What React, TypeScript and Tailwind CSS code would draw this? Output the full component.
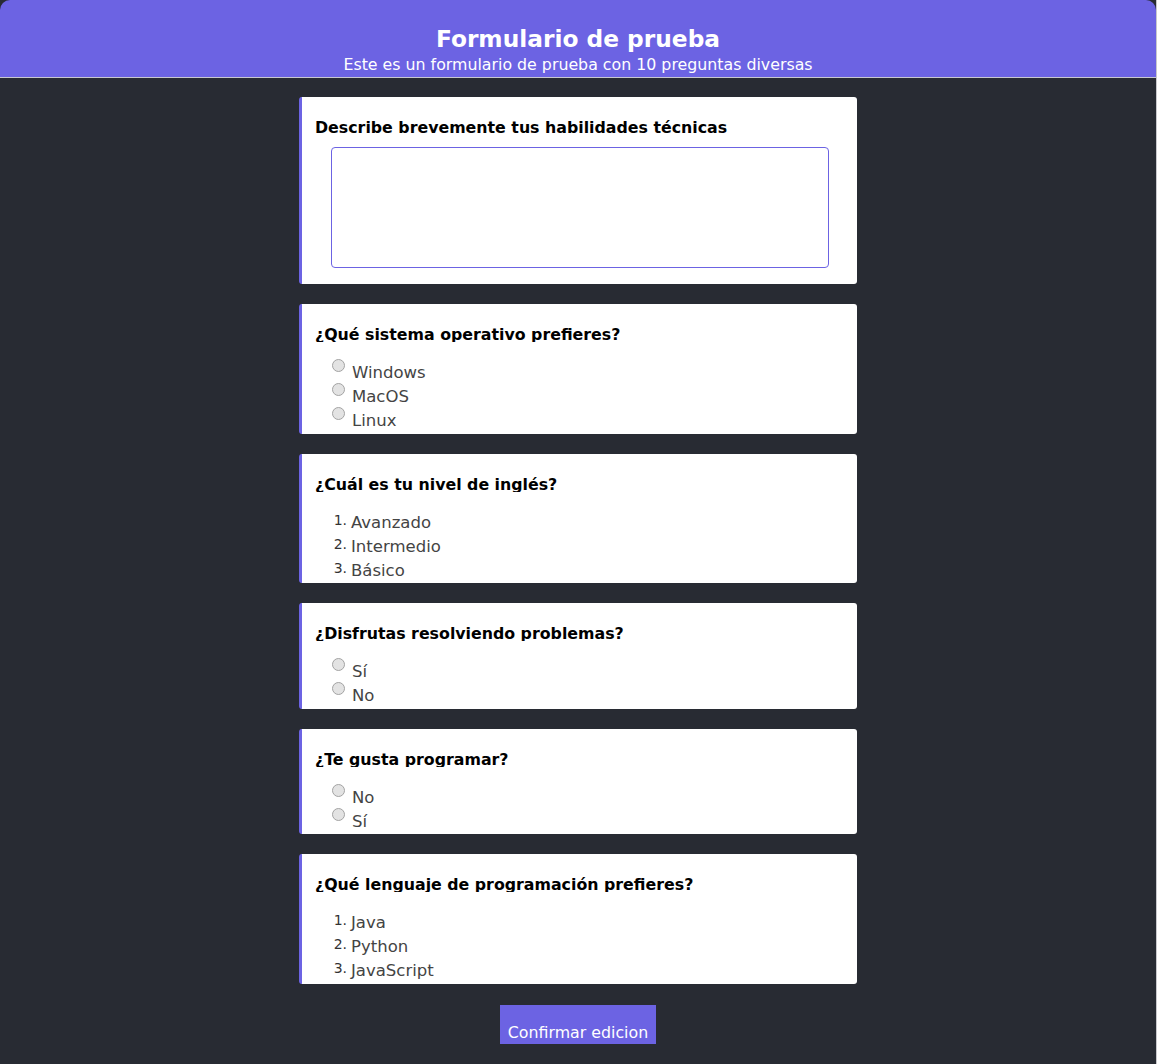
import React from 'react';

type Question =
  | { id: number; title: string; kind: 'text' }
  | { id: number; title: string; kind: 'radio' | 'list'; options: string[] };

const questions: Question[] = [
  { id: 1, title: 'Describe brevemente tus habilidades técnicas', kind: 'text' },
  { id: 2, title: '¿Qué sistema operativo prefieres?', kind: 'radio', options: ['Windows', 'MacOS', 'Linux'] },
  { id: 3, title: '¿Cuál es tu nivel de inglés?', kind: 'list', options: ['Avanzado', 'Intermedio', 'Básico'] },
  { id: 4, title: '¿Disfrutas resolviendo problemas?', kind: 'radio', options: ['Sí', 'No'] },
  { id: 5, title: '¿Te gusta programar?', kind: 'radio', options: ['No', 'Sí'] },
  { id: 6, title: '¿Qué lenguaje de programación prefieres?', kind: 'list', options: ['Java', 'Python', 'JavaScript'] },
];

const QuestionCard: React.FC<{ q: Question }> = ({ q }) => {
  return (
    <div className="w-[558px] bg-white rounded-[3px] border-l-[3px] border-[#6c63e3] pl-[13px] pr-4 pt-[17px] pb-[1.5px]">
      <h3 className="h-[21px] overflow-hidden text-[15.8px] leading-[27px] font-bold text-black">{q.title}</h3>

      {q.kind === 'text' && (
        <div className="mt-[12px] pb-[14.5px]">
          <textarea className="ml-4 block w-[498px] h-[121px] resize-none rounded-[4px] border border-[#6c63e3] bg-white outline-none" />
        </div>
      )}

      {q.kind === 'radio' && (
        <div className="mt-[18px] pl-[17px]">
          {q.options.map((opt) => (
            <label key={opt} className="flex items-start h-6">
              <input
                type="radio"
                name={`q${q.id}`}
                disabled
                className="appearance-none mt-[-1px] w-[13px] h-[13px] shrink-0 rounded-full border border-[#a3a3a3] bg-[#e3e3e3]"
              />
              <span className="ml-[7px] pt-px text-[16.5px] leading-6 text-[#444]">{opt}</span>
            </label>
          ))}
        </div>
      )}

      {q.kind === 'list' && (
        <ol className="mt-[18px]">
          {q.options.map((opt, i) => (
            <li key={opt} className="flex items-start h-6">
              <span className="w-[32px] mt-[2px] text-right text-[14px] leading-4 text-[#333]">{i + 1}.</span>
              <span className="ml-[4px] pt-px text-[16.5px] leading-6 text-[#444]">{opt}</span>
            </li>
          ))}
        </ol>
      )}
    </div>
  );
};

export default function App() {
  return (
    <div className="w-[1157px] bg-white font-['DejaVu_Sans',sans-serif]">
      <div className="w-[1157px] border-r border-b border-[#c8c8cc] bg-[#282b33]">
        <header className="h-[78px] bg-[#6c63e3] rounded-t-[10px] border-b border-[#c8c8d0] text-center text-white pt-[23px]">
          <h1 className="text-[23.3px] leading-[32px] font-bold">Formulario de prueba</h1>
          <p className="text-[15.8px] leading-[19px]">Este es un formulario de prueba con 10 preguntas diversas</p>
        </header>

        <main className="flex flex-col items-center gap-5 pt-[19px] pb-5">
          {questions.map((q) => (
            <QuestionCard key={q.id} q={q} />
          ))}

          <button
            type="button"
            className="mt-px h-[39px] bg-[#6c63e3] px-2 pt-[17px] text-[15.8px] leading-[20px] text-white"
          >
            Confirmar edicion
          </button>
        </main>
      </div>
    </div>
  );
}
